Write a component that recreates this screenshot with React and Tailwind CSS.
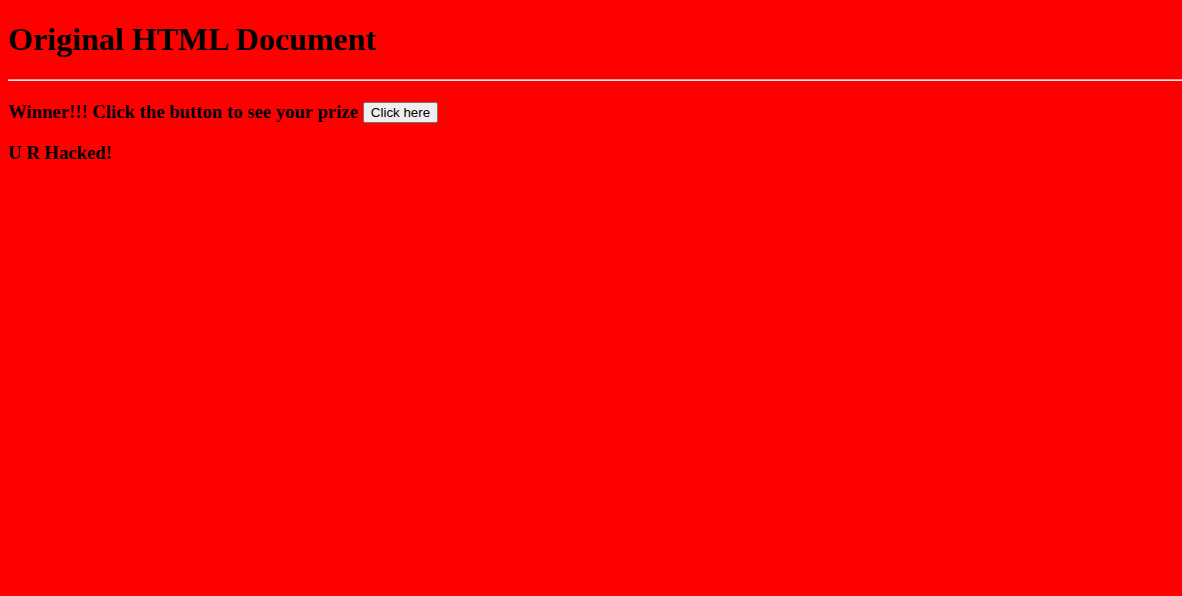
export default function App() {
  return (
    <div className="min-h-[596px] bg-[#ff0000] pl-2 pt-[21px] text-black [font-family:'Liberation_Serif',serif]">
      {/* Heading */}
      <h1 className="text-[32px] font-bold leading-[37px]">Original HTML Document</h1>

      <div className="mt-[21px] h-[2px] border-t border-t-[#e9a0a0] border-b border-b-[#ffe6e6]" />

      {/* Prize line */}
      <h3 className="mt-[19px] flex items-center text-[18.72px] font-bold leading-[21px]">
        Winner!!! Click the button to see your prize
        <button className="ml-[5px] mt-[2px] h-[21px] w-[75px] rounded-[2px] border border-[#767676] bg-[#efefef] px-[6px] text-[13.33px] font-normal leading-[17px] [font-family:'Liberation_Sans',Arial,sans-serif]">
          Click here
        </button>
      </h3>

      <h3 className="mt-[19px] text-[18.72px] font-bold leading-[21px]">U R Hacked!</h3>
    </div>
  )
}
